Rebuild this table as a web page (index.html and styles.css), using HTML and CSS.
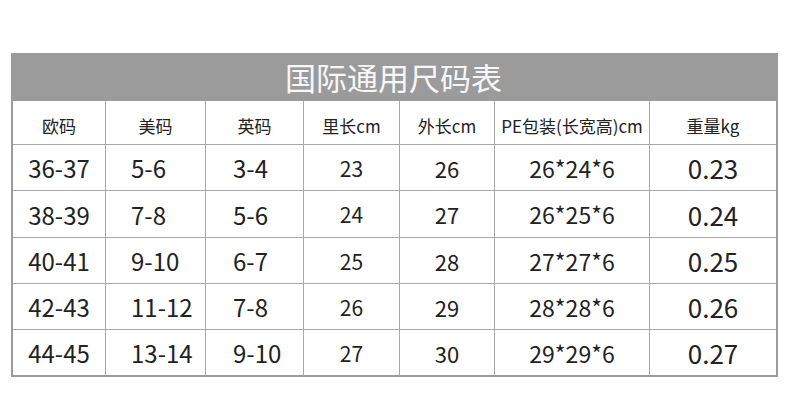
FILE: index.html
```html
<!DOCTYPE html>
<html lang="zh">
<head>
<meta charset="utf-8">
<title>国际通用尺码表</title>
<link rel="stylesheet" href="styles.css">
</head>
<body>
<div class="chart">
  <div class="title">国际通用尺码表</div>
  <div class="grid">
    <div class="cell head">欧码</div>
    <div class="cell head">美码</div>
    <div class="cell head">英码</div>
    <div class="cell head">里长cm</div>
    <div class="cell head">外长cm</div>
    <div class="cell head">PE包装(长宽高)cm</div>
    <div class="cell head last">重量kg</div>

    <div class="cell c1">36-37</div><div class="cell c2">5-6</div><div class="cell c3">3-4</div><div class="cell c4">23</div><div class="cell c5">26</div><div class="cell c6">26*24*6</div><div class="cell c7 last">0.23</div>
    <div class="cell c1">38-39</div><div class="cell c2">7-8</div><div class="cell c3">5-6</div><div class="cell c4">24</div><div class="cell c5">27</div><div class="cell c6">26*25*6</div><div class="cell c7 last">0.24</div>
    <div class="cell c1">40-41</div><div class="cell c2">9-10</div><div class="cell c3">6-7</div><div class="cell c4">25</div><div class="cell c5">28</div><div class="cell c6">27*27*6</div><div class="cell c7 last">0.25</div>
    <div class="cell c1">42-43</div><div class="cell c2">11-12</div><div class="cell c3">7-8</div><div class="cell c4">26</div><div class="cell c5">29</div><div class="cell c6">28*28*6</div><div class="cell c7 last">0.26</div>
    <div class="cell c1 bottom">44-45</div><div class="cell c2 bottom">13-14</div><div class="cell c3 bottom">9-10</div><div class="cell c4 bottom">27</div><div class="cell c5 bottom">30</div><div class="cell c6 bottom">29*29*6</div><div class="cell c7 last bottom">0.27</div>
  </div>
</div>
</body>
</html>
```

FILE: styles.css
```css
html, body {
  margin: 0;
  padding: 0;
  background: #ffffff;
}
body {
  padding: 53px 0 0 11px;
  font-family: "Noto Sans CJK SC", "Noto Sans", sans-serif;
  color: #222222;
}
.chart {
  width: 763px;
  border-left: 2px solid #9c9c9c;
  border-right: 2px solid #9c9c9c;
  border-bottom: 2px solid #9c9c9c;
}
.title {
  height: 48px;
  background: #9b9b9b;
  color: #f7f7f7;
  font-size: 31px;
  line-height: 48px;
  text-align: center;
  padding-right: 2px;
}
.grid {
  display: grid;
  grid-template-columns: 93px 100px 98px 96px 95px 155px 126px;
  grid-template-rows: 44px 46px 47px 46px 46px 45px;
}
.cell {
  border-right: 1px solid #a8a8a8;
  border-bottom: 1px solid #a8a8a8;
  display: flex;
  align-items: center;
  justify-content: center;
  white-space: nowrap;
}
.cell.last { border-right: none; }
.cell.bottom { border-bottom: none; }
.head {
  font-size: 17px;
  padding-top: 6px;
}
.c1 { font-size: 24px; }
.c2 { font-size: 24px; justify-content: flex-start; padding-left: 25px; }
.c3 { font-size: 24px; justify-content: flex-start; padding-left: 27px; }
.c4 { font-size: 21px; }
.c5 { font-size: 22px; }
.c6 { font-size: 23px; }
.c7 { font-size: 26px; }
```
